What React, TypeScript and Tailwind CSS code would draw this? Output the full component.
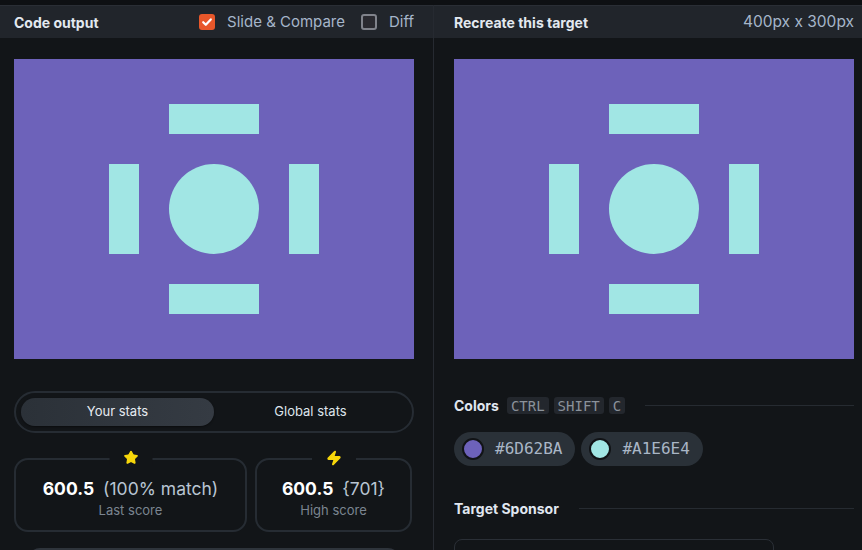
import { Star, Zap } from "lucide-react";

function TargetArt() {
  return (
    <div className="shrink-0 w-[400px] h-[300px] bg-[#6d62ba] flex flex-col items-center justify-center gap-[30px]">
      <div className="w-[90px] h-[30px] bg-[#a1e6e4]" />
      <div className="flex items-center gap-[30px]">
        <div className="w-[30px] h-[90px] bg-[#a1e6e4]" />
        <div className="w-[90px] h-[90px] rounded-full bg-[#a1e6e4]" />
        <div className="w-[30px] h-[90px] bg-[#a1e6e4]" />
      </div>
      <div className="w-[90px] h-[30px] bg-[#a1e6e4]" />
    </div>
  );
}

function StatCard({
  icon,
  score,
  extra,
  label,
  className,
}: {
  icon: React.ReactNode;
  score: string;
  extra: string;
  label: string;
  className?: string;
}) {
  return (
    <div className={"relative h-[74px] rounded-[14px] border-2 border-[#262c33] flex flex-col items-center justify-center " + (className ?? "")}>
      <span className="absolute -top-[10px] left-1/2 -translate-x-1/2 px-[14px] bg-[#121518] flex items-center">
        {icon}
      </span>
      <div className="flex items-baseline gap-[9px] mt-[6px]">
        <span className="text-[17.5px] font-bold text-white">{score}</span>
        <span className="text-[17.5px] text-[#b9c5d3]">{extra}</span>
      </div>
      <span className="text-[13px] text-[#7b8591] -mt-[1px]">{label}</span>
    </div>
  );
}

function Kbd({ children }: { children: React.ReactNode }) {
  return (
    <span className="h-[17px] px-[4px] rounded-[3px] bg-[#23272d] text-[14px] leading-none text-[#8b929b] flex items-center font-['DejaVu_Sans_Mono',monospace]">
      {children}
    </span>
  );
}

function ColorPill({ hex }: { hex: string }) {
  return (
    <div className="h-[34px] rounded-full bg-[#2a3138] flex items-center pl-[8px] pr-[13px] gap-[11px]">
      <span className="w-[22px] h-[22px] rounded-full border-2 border-[#111316]" style={{ backgroundColor: hex }} />
      <span className="text-[16px] text-[#a9b6c6] font-['DejaVu_Sans_Mono',monospace]">{hex}</span>
    </div>
  );
}

export default function App() {
  return (
    <div className="w-[862px] h-[550px] bg-[#121518] overflow-hidden flex flex-col font-['Inter',sans-serif]">
      <div className="shrink-0 h-[5px] bg-[#0e1013]" />
      <div className="flex flex-1 min-h-0">
        {/* left panel */}
        <div className="w-[434px] shrink-0 border-r border-[#262a31] flex flex-col overflow-hidden">
          <div className="shrink-0 h-[33px] bg-[#21252b] border-t border-[#2a2e35] flex items-center pl-[14px] pr-[19px]">
            <span className="text-[14px] font-bold text-[#e3e9f0]">Code output</span>
            <div className="ml-auto flex items-center">
              <span className="w-[16px] h-[16px] rounded-[3px] bg-[#e8572a] flex items-center justify-center">
                <svg width="12" height="12" viewBox="0 0 12 12" fill="none">
                  <path d="M2.2 6.2l2.6 2.6 5-5.4" stroke="white" strokeWidth="2.2" strokeLinecap="round" strokeLinejoin="round" />
                </svg>
              </span>
              <span className="ml-[12px] text-[15px] text-[#a6b6ca]">Slide &amp; Compare</span>
              <span className="ml-[16px] w-[16px] h-[16px] rounded-[3px] border-2 border-[#80838b] bg-[#2a2a30]" />
              <span className="ml-[12px] text-[15px] text-[#a6b6ca]">Diff</span>
            </div>
          </div>
          <div className="shrink-0 pl-[14px] pr-[19px] pt-[21px] flex flex-col">
            <TargetArt />
            <div className="shrink-0 mt-[32px] h-[42px] rounded-full border-2 border-[#262c33] p-[5px] grid grid-cols-2">
              <div className="rounded-full bg-gradient-to-r from-[#2b3138] to-[#353b43] flex items-center justify-center text-[13px] text-[#e6ebf1] shadow-[0_1px_2px_rgba(0,0,0,0.4)]">
                Your stats
              </div>
              <div className="flex items-center justify-center text-[13px] text-[#dfe5ec]">Global stats</div>
            </div>
            <div className="shrink-0 mt-[25px] flex gap-[8px]">
              <StatCard
                className="w-[233px]"
                icon={<Star size={15} className="text-[#f7d70a]" fill="#f7d70a" />}
                score="600.5"
                extra="(100% match)"
                label="Last score"
              />
              <StatCard
                className="w-[157px]"
                icon={<Zap size={16} className="text-[#f7d70a]" fill="#f7d70a" />}
                score="600.5"
                extra="{701}"
                label="High score"
              />
            </div>
            <div className="shrink-0 mt-[16px] mx-[14px] h-[20px] rounded-t-[12px] border-t-2 border-[#2e343b] bg-[#181c20]" />
          </div>
        </div>

        {/* right panel */}
        <div className="flex-1 flex flex-col overflow-hidden">
          <div className="shrink-0 h-[33px] bg-[#21252b] border-t border-[#2a2e35] flex items-center pl-[20px] pr-[8px]">
            <span className="text-[14px] font-bold text-[#e3e9f0]">Recreate this target</span>
            <span className="ml-auto text-[15.5px] text-[#a6b6ca]">400px x 300px</span>
          </div>
          <div className="shrink-0 pl-[20px] pr-[8px] pt-[21px] flex flex-col">
            <TargetArt />
            <div className="shrink-0 mt-[36px] flex items-center">
              <span className="text-[14px] font-bold text-[#e0e7f0]">Colors</span>
              <div className="ml-[8px] flex gap-[5px]">
                <Kbd>CTRL</Kbd>
                <Kbd>SHIFT</Kbd>
                <Kbd>C</Kbd>
              </div>
              <div className="ml-[20px] flex-1 h-px bg-[#262b31]" />
            </div>
            <div className="shrink-0 mt-[16px] flex gap-[6px]">
              <ColorPill hex="#6D62BA" />
              <ColorPill hex="#A1E6E4" />
            </div>
            <div className="shrink-0 mt-[32px] flex items-center">
              <span className="text-[14px] font-bold text-[#e0e7f0]">Target Sponsor</span>
              <div className="ml-[20px] flex-1 h-px bg-[#262b31]" />
            </div>
            <div className="shrink-0 mt-[20px] w-[320px] h-[40px] rounded-[8px] border border-[#2a2f36]" />
          </div>
        </div>
      </div>
    </div>
  );
}
